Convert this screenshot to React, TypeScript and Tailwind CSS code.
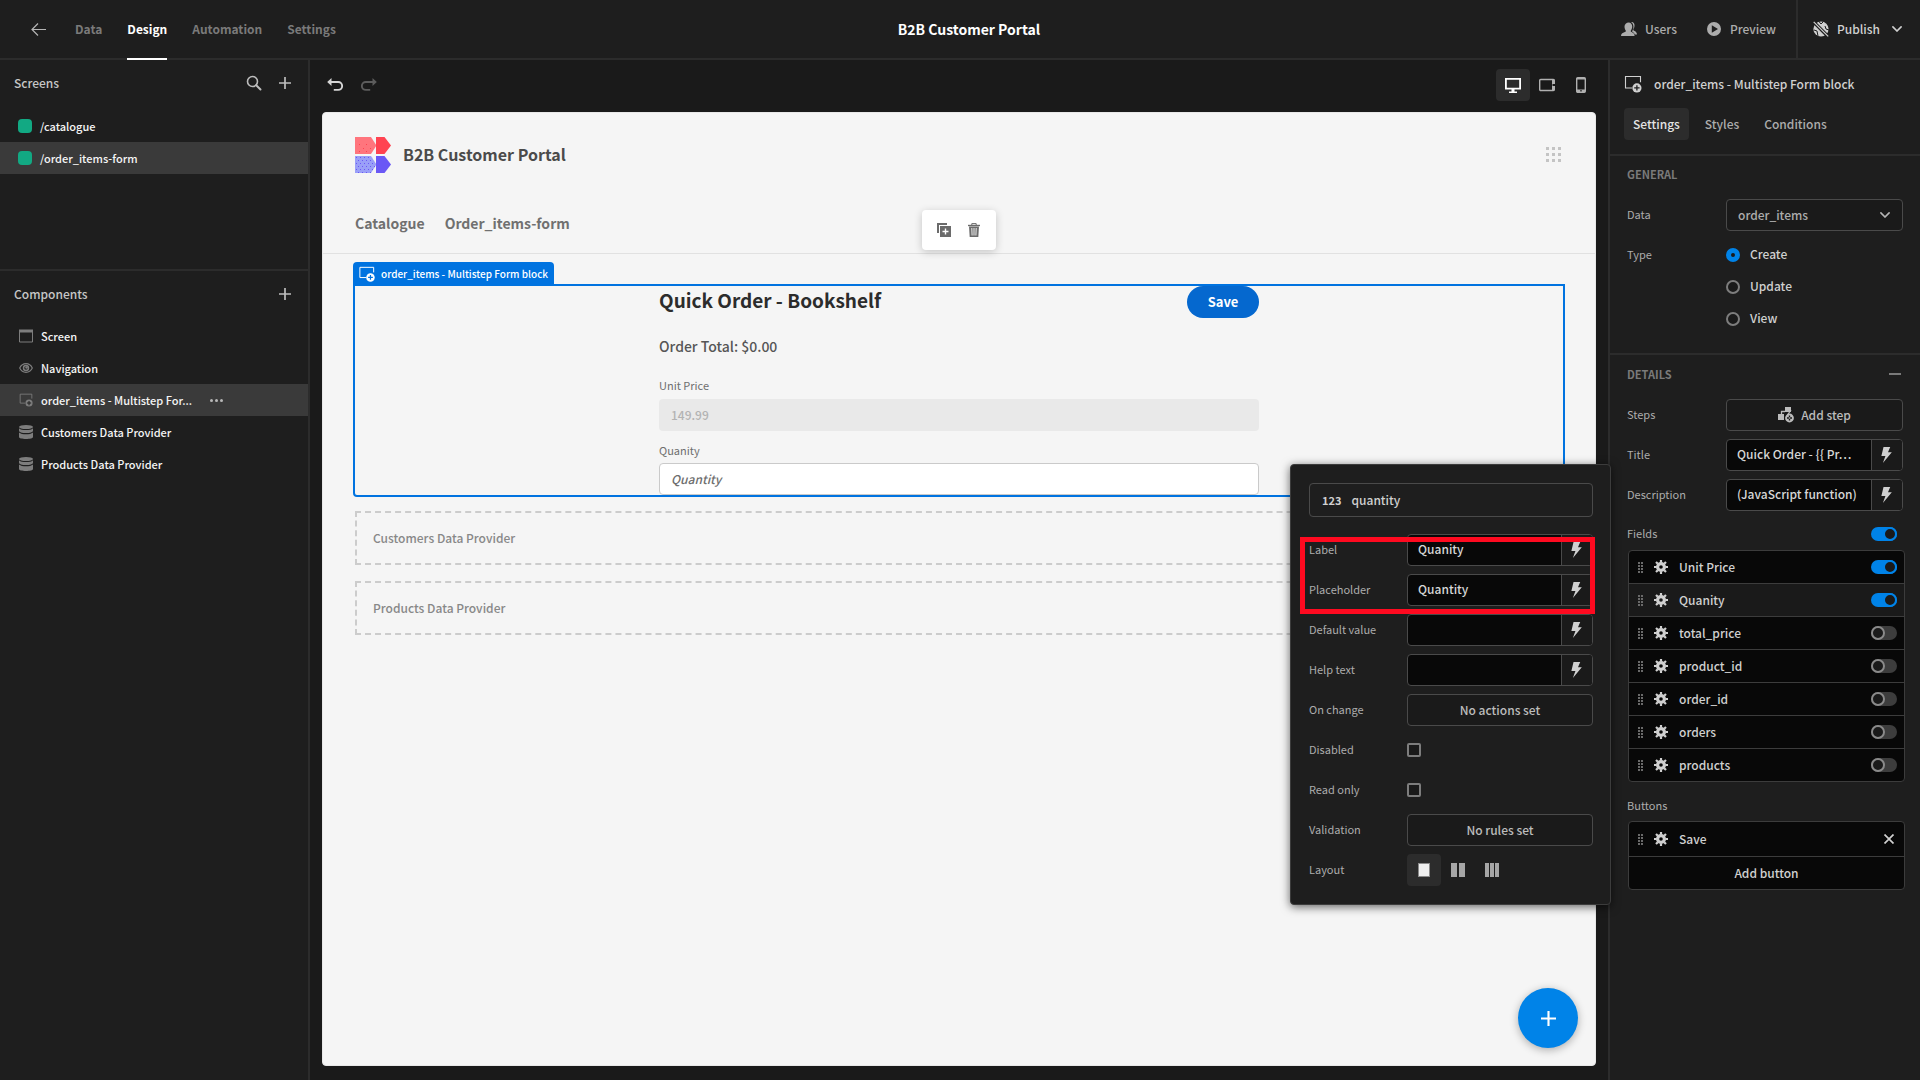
import React, { useState } from "react";

type IconProps = { className?: string };

const BlockIcon = ({ className = "size-[18px]" }: IconProps) => (
  <svg viewBox="0 0 18 18" className={className} fill="none">
    <path d="M8 13H1.5V1.5H16.5V7.2" stroke="currentColor" strokeWidth="1.1" />
    <circle cx="12.9" cy="12.9" r="4.6" fill="currentColor" />
    <path d="M12.9 10.2v5.4M10.2 12.9h5.4" stroke="#1e1e1e" strokeWidth="1.3" />
  </svg>
);

const BlockIconOnBlue = () => (
  <svg viewBox="0 0 18 18" className="size-4" fill="none">
    <path d="M8 13H1V1.5H16.5V7.2" stroke="#fff" strokeWidth="1.1" />
    <circle cx="12.9" cy="12.9" r="4.8" fill="#fff" />
    <path d="M12.9 10.2v5.4M10.2 12.9h5.4" stroke="#0073e0" strokeWidth="1.4" />
  </svg>
);

const ScreenIcon = () => (
  <svg viewBox="0 0 14 14" className="size-3.5" fill="none">
    <path d="M.5 1.5h13v11.5H.5z" stroke="currentColor" />
    <path d="M0 .5h14v3H0z" fill="currentColor" />
  </svg>
);

const EyeIcon = () => (
  <svg viewBox="0 0 14 14" className="size-3.5" fill="none">
    <path d="M.7 7C2 4.300 4.300 2.700 7 2.700S12 4.300 13.300 7C12 9.700 9.700 11.300 7 11.300S2 9.700.7 7z" stroke="currentColor" strokeWidth="1.200" />
    <circle cx="7" cy="7" r="2.500" stroke="currentColor" strokeWidth="1.500" />
    <circle cx="7.500" cy="6.500" r="1.200" fill="currentColor" />
  </svg>
);

const DataIcon = () => (
  <svg viewBox="0 0 14 14" className="size-3.5" fill="currentColor">
    <ellipse cx="7" cy="2" rx="7" ry="2" />
    <path d="M0 3.300C1.500 4.800 4 5.100 7 5.100s5.500-.3 7-1.800v2.500C14 7.200 11 8.100 7 8.100S0 7.200 0 5.800z" />
    <path d="M0 7.600C1.500 9 4 9.300 7 9.300s5.500-.3 7-1.700V12c0 1.200-3 2-7 2s-7-.8-7-2z" />
  </svg>
);

const SearchIcon = () => (
  <svg viewBox="0 0 16 16" className="size-4" fill="none" stroke="currentColor">
    <circle cx="6.500" cy="6.500" r="5" strokeWidth="1.600" />
    <path d="M10.200 10.200l4.300 4.300" strokeWidth="2" strokeLinecap="round" />
  </svg>
);

const PlusIcon = ({ className = "size-3" }: IconProps) => (
  <svg viewBox="0 0 12 12" className={className} stroke="currentColor" strokeWidth="1.700">
    <path d="M6 0v12M0 6h12" />
  </svg>
);

const BoltIcon = () => (
  <svg viewBox="0 0 10 15" className="mr-px h-4 w-[11px]" fill="currentColor">
    <path d="M2.200 0H8.500L6.400 5H10L1.600 15 4 8.400H.2z" />
  </svg>
);

const GearIcon = () => (
  <svg viewBox="0 0 14 14" className="size-3.5 shrink-0" fill="none" stroke="currentColor">
    <circle cx="7" cy="7" r="3.400" strokeWidth="3.200" />
    <g strokeWidth="2.200">
      <path d="M7 0v2.500M7 11.500V14M0 7h2.500M11.500 7H14" />
      <path d="M2 2l1.800 1.800M10.200 10.200L12 12M2 12l1.800-1.800M10.200 3.800L12 2" />
    </g>
  </svg>
);

const DragIcon = () => (
  <svg viewBox="0 0 5 11" className="h-[11px] w-[5px] shrink-0" fill="#6a6a6a">
    {[0, 3, 6, 9].map((y) => (
      <React.Fragment key={y}>
        <rect x="0" y={y} width="2" height="2" />
        <rect x="3" y={y} width="2" height="2" />
      </React.Fragment>
    ))}
  </svg>
);

const ChevronIcon = () => (
  <svg viewBox="0 0 10 6" className="h-1.5 w-2.5" fill="none" stroke="currentColor" strokeWidth="1.600" strokeLinecap="round">
    <path d="M.9.9L5 5 9.100.9" />
  </svg>
);

const UndoIcon = ({ className = "" }: IconProps) => (
  <svg viewBox="0 0 16 14" className={`h-3.5 w-4 ${className}`}>
    <path d="M4.500 0v8L.2 4z" fill="currentColor" />
    <path d="M3 4h8.200a3.900 3.900 0 0 1 0 7.900H6.800" fill="none" stroke="currentColor" strokeWidth="1.900" />
  </svg>
);

const Logo = () => (
  <svg viewBox="0 0 36 36" className="size-9">
    <defs>
      <pattern id="reddots" width="7" height="7" patternUnits="userSpaceOnUse">
        <rect x="4" y="0" width="1" height="1" fill="#ff4351" />
        <rect x="1" y="4" width="1" height="1" fill="#ff4351" />
      </pattern>
      <pattern id="bluedots" x="1" y="20" width="4" height="6" patternUnits="userSpaceOnUse">
        <rect x="0" y="0" width="1" height="1" fill="#6a58f5" />
        <rect x="2" y="3" width="1" height="1" fill="#6a58f5" />
      </pattern>
    </defs>
    <path d="M0 0h16l5.500 8.500L16 17H0z" fill="#ff757d" />
    <path d="M3 6h15v10H3z" fill="url(#reddots)" />
    <path d="M21 0h8.500L36 8.500 29.500 17H21z" fill="#ff4351" />
    <path d="M0 19h16l5.500 8.500L16 36H0z" fill="#9a9ff8" />
    <path d="M0 19h16l5.500 8.500L16 36H0z" fill="url(#bluedots)" />
    <path d="M21 19h8.500l6.500 8.500-6.500 8.500H21z" fill="#6a58f5" />
  </svg>
);

const UsersIcon = () => (
  <svg viewBox="0 0 16 14" className="h-3.5 w-4" fill="currentColor">
    <path d="M10 0c2.200-.2 3.600 1.300 3.500 3.600 0 1.700-.6 2.800-1.200 3.600-.3.600.1 1.300.8 1.600 1.700.7 2.900 1.800 2.900 3.600h-2.200C13 10.500 11.700 9.900 10.900 9.500c1-1.600 1.600-3 1.500-5.200C12.300 2.300 11.400.9 10 0z" />
    <path d="M7.700.6c2.200 0 3.500 1.700 3.500 4 0 1.900-.7 3-1.300 3.900-.4.700 0 1.300.7 1.600 1.900.8 2.900 1.900 3 3.900H0c.1-2 1.200-3.100 3.900-3.900.8-.3 1.200-.9.800-1.600-.6-.9-1.200-2-1.200-3.900 0-2.300 1.900-4 4.200-4z" />
  </svg>
);

const PlayIcon = () => (
  <svg viewBox="0 0 14 14" className="size-3.5">
    <path fillRule="evenodd" fill="currentColor" d="M7 0a7 7 0 1 1 0 14A7 7 0 0 1 7 0zM4.800 3.300v7.400L11 7z" />
  </svg>
);

const GlobeOffIcon = () => (
  <svg viewBox="0 0 16 16" className="size-4" fill="none">
    <circle cx="8" cy="8" r="7.600" fill="currentColor" />
    <path d="M5.500 0l2.500 3 2-2M1 9l3 1 1 5M12 5l1 3 3 1" stroke="#1e1e1e" strokeWidth="1" />
    <path d="M.3 .7l15 15" stroke="#1e1e1e" strokeWidth="3.400" />
    <path d="M.7.9l14.500 14.500" stroke="currentColor" strokeWidth="1.300" />
  </svg>
);

const StepIcon = () => (
  <svg viewBox="0 0 16 16" className="size-4" fill="none">
    <path d="M0 7h6v6H0zM7 0h6v5H7z" fill="currentColor" />
    <path d="M3.500 7V4.500H7M9.500 8L13 3" stroke="currentColor" strokeWidth="1.300" />
    <circle cx="11.500" cy="11" r="4.400" fill="currentColor" />
    <path d="M11.500 8.500v5M9 11h5" stroke="#1a1a1a" strokeWidth="1.400" />
    <circle cx="11.500" cy="11" r=".8" fill="#bbb" />
  </svg>
);

const DuplicateIcon = () => (
  <svg viewBox="0 0 14 14" className="size-3.5" fill="#6b6b6b">
    <path d="M0 0h10v2H2v8H0z" />
    <path fillRule="evenodd" d="M3 3h11v11H3zM7.800 5.500v2.300H5.500v1.400h2.300v2.300h1.400V9.200h2.300V7.800H9.200V5.500z" />
  </svg>
);

const TrashIcon = () => (
  <svg viewBox="0 0 14 14" className="size-3.5" fill="none" stroke="#6b6b6b">
    <path d="M1 2.500h12" strokeWidth="1.400" />
    <path d="M4.800 2V.6h4.400V2" />
    <path d="M2 3.500h10L11.300 14H2.700z" fill="#6b6b6b" stroke="none" />
    <path d="M4.800 5l.3 7.500M7 5v7.500M9.200 5l-.3 7.500" stroke="#fff" strokeWidth=".9" />
  </svg>
);

const DesktopIcon = () => (
  <svg viewBox="0 0 16 15" className="h-[15px] w-4" fill="none">
    <path d="M.9.900h14.200v9.700H.9z" stroke="currentColor" strokeWidth="1.800" />
    <path d="M6.500 11h3v2.500H12V15H4v-1.500h2.500z" fill="currentColor" />
  </svg>
);

const TabletIcon = () => (
  <svg viewBox="0 0 16 14" className="h-3.5 w-4" fill="none">
    <rect x=".7" y="1.500" width="14.600" height="11" rx="1" stroke="currentColor" strokeWidth="1.400" />
    <path d="M13 1.500h2.500v11H13z" fill="currentColor" />
    <rect x="13.500" y="6" width="2.500" height="2" fill="#1a1a1a" />
  </svg>
);

const PhoneIcon = () => (
  <svg viewBox="0 0 10 16" className="h-4 w-2.5" fill="none">
    <rect x=".7" y=".7" width="8.600" height="14.600" rx="1" stroke="currentColor" strokeWidth="1.400" />
    <path d="M1 1h8v1.500H1zM1 12.500h8V15H1z" fill="currentColor" />
    <rect x="4.200" y="13.200" width="1.600" height="1.200" fill="#1a1a1a" />
  </svg>
);

const NavRow = ({ icon, label, active, more }: { icon: React.ReactNode; label: string; active?: boolean; more?: boolean }) => (
  <li className={`flex h-8 items-center gap-2 pl-[18px] ${active ? "bg-[#3a3a3a]" : ""}`}>
    <span className="text-[#7d7d7d]">{icon}</span>
    <button className="text-left text-[11px] leading-4 font-medium text-[#f5f5f5]">{label}</button>
    {more && (
      <button aria-label="More options" className="ml-2.5 flex gap-[2px]">
        <i className="size-[3px] rounded-full bg-[#b8b8b8]" />
        <i className="size-[3px] rounded-full bg-[#b8b8b8]" />
        <i className="size-[3px] rounded-full bg-[#b8b8b8]" />
      </button>
    )}
  </li>
);

const SidebarHeader = ({ title, search }: { title: string; search?: boolean }) => (
  <div className="flex h-[46px] items-center justify-between pr-[17px] pl-3.5">
    <h2 className="text-[12px] leading-5 font-medium text-[#c6c6c6]">{title}</h2>
    <div className="flex items-center gap-[17px] text-[#bdbdbd]">
      {search && <button aria-label="Search screens"><SearchIcon /></button>}
      <button aria-label={`Add to ${title}`}><PlusIcon /></button>
    </div>
  </div>
);

const BindingInput = ({ id, value }: { id: string; value: string }) => (
  <div className="flex h-8 min-w-0 flex-1 overflow-hidden rounded-[4px] border border-[#4a4a4a] bg-[#080808]">
    <input id={id} defaultValue={value} className="min-w-0 flex-1 bg-transparent px-2.5 pb-0.5 text-[12px] leading-5 font-medium text-[#d6d6d6] outline-none" />
    <button aria-label={`Bind ${id}`} className="flex w-[31px] shrink-0 items-center justify-center border-l border-[#4a4a4a] bg-[#1a1a1a] text-[#d0d0d0]">
      <BoltIcon />
    </button>
  </div>
);

const OutlineButton = ({ id, children }: { id: string; children: React.ReactNode }) => (
  <button id={id} className="flex h-8 flex-1 items-center justify-center gap-[7px] rounded-[4px] border border-[#4a4a4a] bg-[#1a1a1a] text-[12px] leading-5 font-medium text-[#bcbcbc]">
    {children}
  </button>
);

const Property = ({ id, label, labelWidth, children }: { id: string; label: string; labelWidth: string; children: React.ReactNode }) => (
  <div className="flex items-center">
    <label htmlFor={id} className={`${labelWidth} shrink-0 pb-0.5 text-[11px] leading-4 text-[#adadad]`}>{label}</label>
    {children}
  </div>
);

const Toggle = ({ label, initial }: { label: string; initial: boolean }) => {
  const [on, setOn] = useState(initial);
  return (
    <input
      type="checkbox"
      role="switch"
      aria-label={label}
      checked={on}
      onChange={() => setOn(!on)}
      className="h-3.5 w-[26px] shrink-0 appearance-none rounded-full bg-[#3d3d3d] before:block before:size-3.5 before:rounded-full before:border-2 before:border-[#8a8a8a] before:bg-[#1a1a1a] checked:bg-[#0083e8] checked:before:ml-3 checked:before:border-[#0083e8]"
    />
  );
};

const Checkbox = ({ id }: { id: string }) => (
  <span className="flex h-8 items-center">
    <input id={id} type="checkbox" className="size-3.5 appearance-none rounded-[2px] border-2 border-[#7d7d7d] bg-[#1a1a1a] checked:bg-[#0083e8]" />
  </span>
);

const fields = [
  { name: "Unit Price", on: true },
  { name: "Quanity", on: true },
  { name: "total_price", on: false },
  { name: "product_id", on: false },
  { name: "order_id", on: false },
  { name: "orders", on: false },
  { name: "products", on: false },
];

const TopBar = () => (
  <header className="grid h-[60px] shrink-0 grid-cols-[1fr_auto_1fr] border-b-2 border-[#2c2c2c] pl-[18px]">
    <nav className="flex items-center gap-[25px] pl-[13px] text-[12px] leading-5 font-bold text-[#7a7a7a]">
      <button aria-label="Back" className="mr-1 text-[#b5b5b5]">
        <svg viewBox="0 0 15 13" className="h-[13px] w-[15px]" fill="none" stroke="currentColor" strokeWidth="1.200">
          <path d="M15 6.500H1M7 .5l-6 6 6 6" />
        </svg>
      </button>
      <a href="#data">Data</a>
      <a href="#design" className="-mb-0.5 flex h-[60px] items-center border-b-2 border-white text-white">Design</a>
      <a href="#automation">Automation</a>
      <a href="#settings">Settings</a>
    </nav>
    <h1 className="self-center text-[14px] leading-5 font-bold text-white">B2B Customer Portal</h1>
    <div className="flex items-center justify-end text-[12px] leading-5 font-medium text-[#acacac]">
      <button className="mr-[30px] flex items-center gap-2"><UsersIcon />Users</button>
      <button className="mr-5 flex items-center gap-[9px]"><PlayIcon />Preview</button>
      <button className="flex h-full items-center gap-2 border-l-2 border-[#2c2c2c] px-[15px] pr-[18px] text-[#d0d0d0]">
        <GlobeOffIcon />
        <span className="mr-1">Publish</span>
        <ChevronIcon />
      </button>
    </div>
  </header>
);

const LeftSidebar = () => (
  <aside className="flex w-[310px] shrink-0 flex-col border-r-2 border-[#2c2c2c]">
    <section className="h-[211px] border-b-2 border-[#2c2c2c]">
      <SidebarHeader title="Screens" search />
      <ul className="pt-1">
        <NavRow icon={<span className="block size-3.5 rounded-[4px] bg-[#12a983]" />} label="/catalogue" />
        <NavRow icon={<span className="block size-3.5 rounded-[4px] bg-[#12a983]" />} label="/order_items-form" active />
      </ul>
    </section>
    <section>
      <SidebarHeader title="Components" />
      <ul className="pt-[3px] [&_li]:pl-[19px]">
        <NavRow icon={<ScreenIcon />} label="Screen" />
        <NavRow icon={<EyeIcon />} label="Navigation" />
        <NavRow icon={<BlockIcon className="size-3.5" />} label="order_items - Multistep For..." active more />
        <NavRow icon={<DataIcon />} label="Customers Data Provider" />
        <NavRow icon={<DataIcon />} label="Products Data Provider" />
      </ul>
    </section>
  </aside>
);

const FormBlock = () => (
  <div className="relative mt-[30px] h-[213px]">
    <div className="absolute -top-[22px] -left-0.5 flex h-6 items-center gap-1.5 rounded-t-[4px] bg-[#0073e0] px-1.5 text-[10px] leading-4 font-medium text-white">
      <BlockIconOnBlue />
      order_items - Multistep Form block
    </div>
    <div className="-mx-0.5 h-full rounded-b-[4px] border-2 border-[#0073e0]">
      <form className="mx-auto w-[600px]">
        <div className="flex h-8 items-center justify-between">
          <h2 className="pb-1 text-[19px] leading-7 font-bold text-[#2c2c2c]">Quick Order - Bookshelf</h2>
          <button type="button" className="h-8 w-[72px] rounded-full bg-[#0568cf] text-[13px] font-bold text-white">Save</button>
        </div>
        <p className="mt-4 text-[14px] leading-6 font-medium text-[#565656]">Order Total: $0.00</p>
        <label htmlFor="unit-price" className="mt-[19px] block text-[11px] leading-4 text-[#6e6e6e]">Unit Price</label>
        <input id="unit-price" disabled value="149.99" className="mt-1.5 block h-8 w-full rounded-[4px] bg-[#e9e9e9] px-3 pb-0.5 text-[12px] font-medium text-[#b3b3b3]" />
        <label htmlFor="order-quantity" className="mt-[11px] block text-[11px] leading-4 text-[#6e6e6e]">Quanity</label>
        <input id="order-quantity" placeholder="Quantity" className="mt-[5px] block h-8 w-full rounded-[4px] border border-[#cacaca] bg-white px-[11px] pb-0.5 text-[12px] font-medium text-[#4b4b4b] placeholder:text-[#6e6e6e] placeholder:italic" />
      </form>
    </div>
  </div>
);

const FieldPopover = () => (
  <div className="absolute top-[404px] -right-[3px] z-20 w-[321px] rounded-[4px] border border-[#3c3c3c] bg-[#1e1e1e] p-[18px] pr-[17px] shadow-[0_2px_10px_rgba(0,0,0,0.6)]">
    <div className="mb-[17px] flex h-[34px] items-center gap-2.5 rounded-[4px] border border-[#4a4a4a] px-3 text-[12px] leading-5 font-medium text-[#d0d0d0]">
      <span className="text-[11px] leading-5 font-bold">123</span>
      quantity
    </div>
    <div className="flex flex-col gap-2">
      <Property id="label" label="Label" labelWidth="w-[98px]"><BindingInput id="label" value="Quanity" /></Property>
      <Property id="placeholder" label="Placeholder" labelWidth="w-[98px]"><BindingInput id="placeholder" value="Quantity" /></Property>
      <Property id="default-value" label="Default value" labelWidth="w-[98px]"><BindingInput id="default-value" value="" /></Property>
      <Property id="help-text" label="Help text" labelWidth="w-[98px]"><BindingInput id="help-text" value="" /></Property>
      <Property id="on-change" label="On change" labelWidth="w-[98px]"><OutlineButton id="on-change">No actions set</OutlineButton></Property>
      <Property id="disabled" label="Disabled" labelWidth="w-[98px]"><Checkbox id="disabled" /></Property>
      <Property id="read-only" label="Read only" labelWidth="w-[98px]"><Checkbox id="read-only" /></Property>
      <Property id="validation" label="Validation" labelWidth="w-[98px]"><OutlineButton id="validation">No rules set</OutlineButton></Property>
      <Property id="layout-one" label="Layout" labelWidth="w-[98px]">
        <button id="layout-one" aria-label="One column" className="flex h-8 w-[34px] items-center justify-center rounded-[4px] bg-[#2c2c2c]">
          <i className="h-3.5 w-3 border border-[#8a8a8a] bg-[#efefef]" />
        </button>
        <button aria-label="Two columns" className="flex h-8 w-[34px] items-center justify-center gap-[2px]">
          <i className="h-3.5 w-1.5 bg-[#a6a6a6]" />
          <i className="h-3.5 w-1.5 bg-[#a6a6a6]" />
        </button>
        <button aria-label="Three columns" className="flex h-8 w-[34px] items-center justify-center gap-px">
          <i className="h-3.5 w-1 bg-[#a6a6a6]" />
          <i className="h-3.5 w-1 bg-[#a6a6a6]" />
          <i className="h-3.5 w-1 bg-[#a6a6a6]" />
        </button>
      </Property>
    </div>
    <div className="pointer-events-none absolute top-[72px] left-[9px] h-[77px] w-[295px] border-[5px] border-[#ff0a20]" />
  </div>
);

const Canvas = () => (
  <main className="relative flex min-w-0 flex-1 flex-col bg-[#1a1a1a] px-3 pb-3.5">
    <div className="-mr-0.5 -ml-1 flex h-[50px] shrink-0 items-center justify-between">
      <div className="flex">
        <button aria-label="Undo" className="flex w-[34px] justify-center text-[#d6d6d6]"><UndoIcon /></button>
        <button aria-label="Redo" className="flex w-[34px] justify-center text-[#5c5c5c]"><UndoIcon className="-scale-x-100" /></button>
      </div>
      <div className="flex text-[#b0b0b0]">
        <button aria-label="Desktop" className="flex h-8 w-[34px] items-center justify-center rounded-[4px] bg-[#2c2c2c] text-white"><DesktopIcon /></button>
        <button aria-label="Tablet" className="flex h-8 w-[34px] items-center justify-center"><TabletIcon /></button>
        <button aria-label="Mobile" className="flex h-8 w-[34px] items-center justify-center"><PhoneIcon /></button>
      </div>
    </div>
    <div className="relative mt-0.5 flex-1 rounded-[4px] border border-[#e8e8e8] bg-[#f5f5f5]">
      <div className="border-b border-[#e1e1e1] px-8 pt-6">
        <div className="flex h-9 items-center justify-between">
          <div className="flex items-center gap-3">
            <Logo />
            <span className="pb-0.5 text-[16px] leading-6 font-bold text-[#4b4b4b]">B2B Customer Portal</span>
          </div>
          <button aria-label="Apps" className="mr-0.5 mb-0.5 grid grid-cols-3 gap-[3px]">
            {Array.from({ length: 9 }, (_, i) => (
              <i key={i} className="size-[3px] bg-[#c4c4c4]" />
            ))}
          </button>
        </div>
        <nav className="mt-[38px] flex gap-5 pb-[18px] text-[14px] leading-6 font-bold text-[#707070]">
          <a href="#catalogue">Catalogue</a>
          <a href="#form">Order_items-form</a>
        </nav>
      </div>
      <div className="px-8">
        <FormBlock />
        <div className="mt-3.5 flex h-[54px] items-center border-2 border-dashed border-[#cccccc] px-4 text-[12px] font-medium text-[#888888]">Customers Data Provider</div>
        <div className="mt-4 flex h-[54px] items-center border-2 border-dashed border-[#cccccc] px-4 text-[12px] font-medium text-[#888888]">Products Data Provider</div>
      </div>
      <div className="absolute top-[97px] left-1/2 flex h-10 w-[74px] -translate-x-1/2 items-center justify-center gap-4 rounded-[4px] bg-white shadow-[0_2px_8px_rgba(0,0,0,0.2)]">
        <button aria-label="Duplicate"><DuplicateIcon /></button>
        <button aria-label="Delete"><TrashIcon /></button>
      </div>
      <button aria-label="Add component" className="absolute right-[17px] bottom-[17px] flex size-[60px] items-center justify-center rounded-full bg-[#0083e8] text-white shadow-[0_2px_8px_rgba(0,0,0,0.3)]">
        <PlusIcon className="size-[15px]" />
      </button>
    </div>
    <FieldPopover />
  </main>
);

const RightPanel = () => (
  <aside className="w-[312px] shrink-0 border-l-2 border-[#2c2c2c]">
    <div className="border-b-2 border-[#2c2c2c] px-3.5 pb-3.5">
      <div className="flex h-12 items-center gap-3 text-[12px] font-medium text-[#d0d0d0]">
        <BlockIcon />
        <h2>order_items - Multistep Form block</h2>
      </div>
      <div className="flex text-[12px] leading-5 font-medium text-[#acacac]">
        <button className="mr-[7px] h-8 rounded-[4px] bg-[#2c2c2c] px-[9px] text-[#e4e4e4]">Settings</button>
        <button className="mr-[7px] h-8 px-[9px]">Styles</button>
        <button className="h-8 px-[9px]">Conditions</button>
      </div>
    </div>
    <section className="border-b-2 border-[#2c2c2c] px-[17px] pt-2 pb-[18px]">
      <h3 className="mb-[15px] text-[11px] leading-5 font-bold text-[#7a7a7a]">GENERAL</h3>
      <Property id="data" label="Data" labelWidth="w-[99px]">
        <div className="relative flex-1">
          <select id="data" className="h-8 w-full appearance-none rounded-[4px] border border-[#4a4a4a] bg-[#1a1a1a] pl-[11px] text-[12px] font-medium text-[#acacac]">
            <option>order_items</option>
          </select>
          <span className="pointer-events-none absolute top-[13px] right-[13px] text-[#b5b5b5]"><ChevronIcon /></span>
        </div>
      </Property>
      <fieldset className="mt-2 flex">
        <legend className="float-left w-[99px] text-[11px] leading-[30px] text-[#adadad]">Type</legend>
        <div>
          {["Create", "Update", "View"].map((name) => (
            <label key={name} className="flex h-8 items-center gap-2.5 text-[12px] leading-5 font-medium text-[#d0d0d0]">
              <input type="radio" name="type" defaultChecked={name === "Create"} className="size-3.5 appearance-none rounded-full border-2 border-[#7d7d7d] bg-[#1a1a1a] checked:border-[5px] checked:border-[#0083e8]" />
              <span className="pb-0.5">{name}</span>
            </label>
          ))}
        </div>
      </fieldset>
    </section>
    <section className="px-[17px] pt-[9px]">
      <div className="mb-[15px] flex h-5 items-center justify-between pr-0.5">
        <h3 className="text-[11px] leading-5 font-bold text-[#7a7a7a]">DETAILS</h3>
        <button aria-label="Collapse details" className="h-0.5 w-3 bg-[#7a7a7a]" />
      </div>
      <div className="flex flex-col gap-2">
        <Property id="steps" label="Steps" labelWidth="w-[99px]"><OutlineButton id="steps"><StepIcon />Add step</OutlineButton></Property>
        <Property id="title" label="Title" labelWidth="w-[99px]"><BindingInput id="title" value="Quick Order - {{ Pr…" /></Property>
        <Property id="description" label="Description" labelWidth="w-[99px]"><BindingInput id="description" value="(JavaScript function)" /></Property>
      </div>
      <div className="mt-[7px] mb-px flex h-[31px] items-center justify-between pr-1.5 text-[11px] text-[#adadad]">
        Fields
        <Toggle label="All fields" initial />
      </div>
      <ul className="-mr-0.5 ml-px divide-y divide-[#3c3c3c] overflow-hidden rounded-[4px] border border-[#3c3c3c] bg-[#080808]">
        {fields.map((f, i) => (
          <li key={f.name} className={`flex items-center pr-[7px] pl-[9px] text-[#d0d0d0] ${i === 6 ? "h-8" : "h-[33px]"} ${f.name === "Quanity" ? "bg-[#1a1a1a]" : ""}`}>
            <DragIcon />
            <button aria-label={`Edit ${f.name}`} className="mr-[11px] ml-[11px]"><GearIcon /></button>
            <span className="flex-1 text-[12px] leading-5 font-medium">{f.name}</span>
            <Toggle label={f.name} initial={f.on} />
          </li>
        ))}
      </ul>
      <div className="mt-2 flex h-[31px] items-center text-[11px] text-[#adadad]">Buttons</div>
      <div className="-mr-0.5 ml-px overflow-hidden rounded-[4px] border border-[#3c3c3c] bg-[#080808] text-[12px] leading-5 font-medium text-[#d0d0d0]">
        <div className="flex h-[35px] items-center border-b border-[#3c3c3c] pr-2.5 pl-[9px]">
          <DragIcon />
          <button aria-label="Edit Save" className="mr-[11px] ml-[11px]"><GearIcon /></button>
          <span className="flex-1">Save</span>
          <button aria-label="Remove Save">
            <svg viewBox="0 0 10 10" className="size-2.5" stroke="currentColor" strokeWidth="1.700"><path d="M.5.5l9 9M9.500.5l-9 9" /></svg>
          </button>
        </div>
        <button className="block h-8 w-full">Add button</button>
      </div>
    </section>
  </aside>
);

export default function App() {
  return (
    <div className="flex h-screen flex-col overflow-hidden bg-[#1e1e1e] font-['Noto_Sans_CJK_SC',sans-serif]">
      <TopBar />
      <div className="flex min-h-0 flex-1">
        <LeftSidebar />
        <Canvas />
        <RightPanel />
      </div>
    </div>
  );
}
